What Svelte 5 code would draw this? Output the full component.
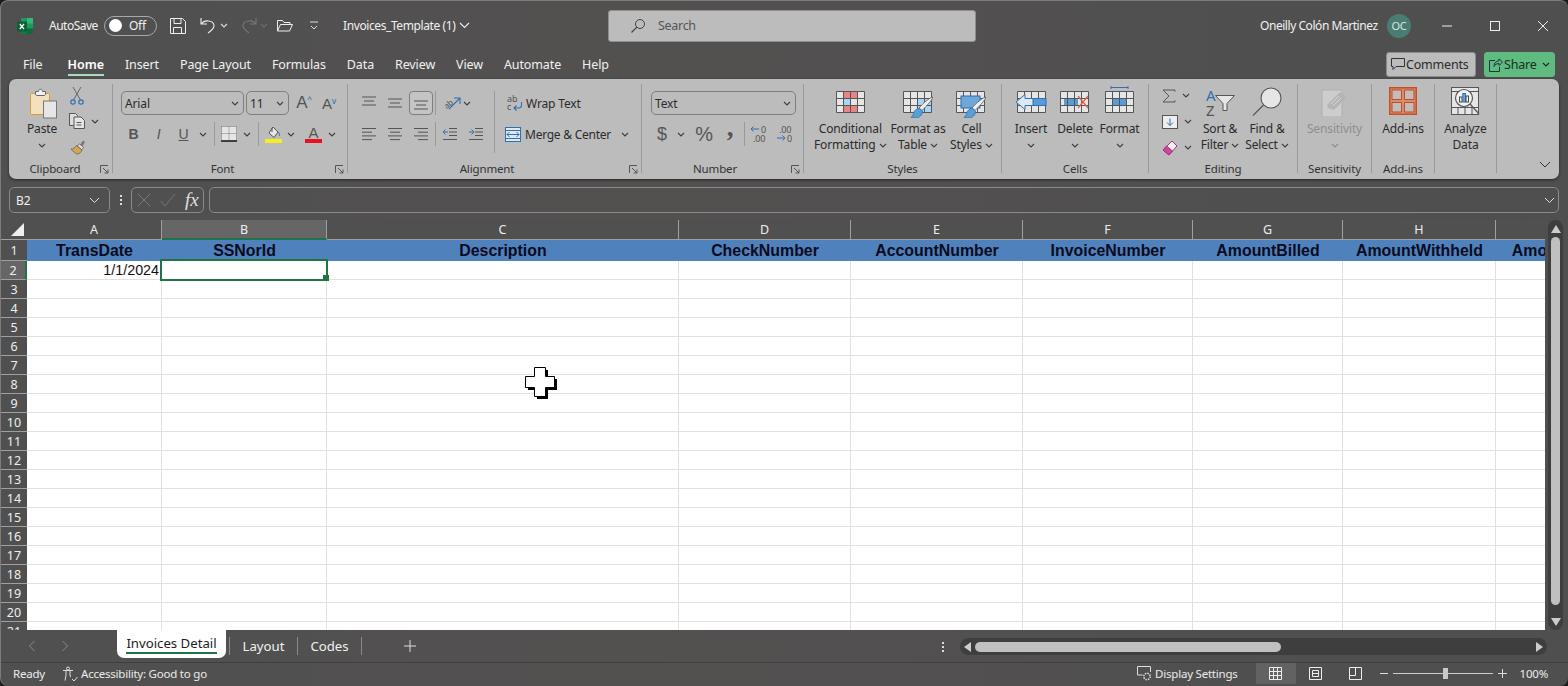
<script>
	const menus = ['File', 'Home', 'Insert', 'Page Layout', 'Formulas', 'Data', 'Review', 'View', 'Automate', 'Help'];
	const cols = [
		{ n: 'A', w: 135, h: 'TransDate' },
		{ n: 'B', w: 165, h: 'SSNorId' },
		{ n: 'C', w: 352, h: 'Description' },
		{ n: 'D', w: 172, h: 'CheckNumber' },
		{ n: 'E', w: 172, h: 'AccountNumber' },
		{ n: 'F', w: 170, h: 'InvoiceNumber' },
		{ n: 'G', w: 150, h: 'AmountBilled' },
		{ n: 'H', w: 153, h: 'AmountWithheld' },
		{ n: '', w: 150, h: 'AmountApplied' } // letter I sits past the right edge, only "Amo" shows
	];
	const rows = Array.from({ length: 20 }, (_, i) => i + 2);
	const gridCols = `26px ${cols.map((c) => c.w + 'px').join(' ')}`;

	// align icons: [x1, x2] for each of the 4 bars
	const alignLeft = [[2, 16], [2, 12], [2, 16], [2, 12]];
	const alignCenter = [[2, 16], [4, 14], [2, 16], [4, 14]];
	const alignRight = [[2, 16], [6, 16], [2, 16], [6, 16]];
</script>

{#snippet chev(color = '#404040')}
	<svg class="chev" width="8" height="5" viewBox="0 0 8 5"><path d="M1 1l3 3 3-3" fill="none" stroke={color} stroke-width="1.1" /></svg>
{/snippet}

{#snippet launcher()}
	<svg class="launcher" width="9" height="9" viewBox="0 0 9 9"><path d="M.5 8V.5H8M3 3l5 5M8 4.500V8H4.500" fill="none" stroke="#555" /></svg>
{/snippet}

{#snippet bars(list)}
	<svg width="18" height="16" viewBox="0 0 18 16">
		{#each list as b, i}
			<path d="M{b[0]} {2.5 + i * 3.7}H{b[1]}" stroke="#555" />
		{/each}
	</svg>
{/snippet}

{#snippet vbars(y)}
	<svg width="18" height="16" viewBox="0 0 18 16">
		<path d="M2 {y}H16M4 {y + 4}H14M2 {y + 8}H16" stroke="#555" fill="none" />
	</svg>
{/snippet}

{#snippet table(fills = [])}
	<g>
		<rect x=".5" y=".5" width="28" height="21" fill="#e6e6e6" />
		{#each fills as f}
			<rect x={f[0]} y={f[1]} width={f[2]} height={f[3]} fill={f[4]} />
		{/each}
		<path d="M.5.500h28v21H.5zM.5 7.500h28M.5 14.500h28M7.500.5v21M14.500.5v21M21.500.5v21" fill="none" stroke="#555" />
	</g>
{/snippet}

{#snippet brush()}
	<path d="M29.500 6c1 2-6 9-10.500 13.500l-3-2.500c4-5 10.500-10 13.500-11z" fill="#eee" stroke="#555" stroke-width=".8" />
	<path d="M8 26.500c1-1 2-2 2.500-4 .5-3 3-5 6-5l3 2.500c0 4-3 7-7 7z" fill="#5a9fd4" stroke="#2f6fb3" stroke-width=".8" />
{/snippet}

<div class="window">
	<header class="title">
		<svg class="logo" width="18" height="18" viewBox="0 0 18 18">
			<rect x="5" y="1" width="12" height="16" rx="1" fill="#1f9a5c" />
			<rect x="11" y="1" width="6" height="5.5" fill="#33b877" />
			<rect x="11" y="11.5" width="6" height="5.5" fill="#10683c" />
			<rect x="5" y="11.5" width="6" height="5.5" fill="#0e7c43" />
			<rect x="1" y="4.5" width="10" height="10" rx="1" fill="#0d5f36" />
			<path d="M3.800 7l4.200 5M8 7l-4.200 5" stroke="#fff" stroke-width="1.300" />
		</svg>
		<span class="autosave">AutoSave</span>
		<span class="toggle"><i></i><span>Off</span></span>
		<svg class="qa save" width="16" height="16" viewBox="0 0 16 16"><path d="M.5.500h12l3 3v12H.5zM4 .5v5h7v-5M3.500 15.500v-6h8v6" fill="none" stroke="#eee" /></svg>
		<svg class="qa undo" width="16" height="17" viewBox="0 0 16 17"><path d="M1 1v6h6M1.500 7C4 2.500 13 3 14 8c.5 3.500-3 6-6 8" fill="none" stroke="#eee" stroke-width="1.100" /></svg>
		<span class="qa c1">{@render chev('#ddd')}</span>
		<svg class="qa redo" width="16" height="17" viewBox="0 0 16 17"><path d="M15 1v6H9M14.500 7C12 2.500 3 3 2 8c-.5 3.500 3 6 6 8" fill="none" stroke="#777" stroke-width="1.100" /></svg>
		<span class="qa c2">{@render chev('#6d6d6d')}</span>
		<svg class="qa open" width="16" height="13" viewBox="0 0 16 13"><path d="M.5 12V1.500h5l1.500 2h6v2M.5 12l3-6.500h12L12.500 12z" fill="none" stroke="#eee" /></svg>
		<svg class="qa more" width="10" height="10" viewBox="0 0 10 10"><path d="M1 1h8M2 5l3 3 3-3" fill="none" stroke="#ddd" /></svg>
		<span class="file">Invoices_Template (1)</span>
		<span class="file-chev"><svg width="11" height="7" viewBox="0 0 11 7"><path d="M1 1l4.500 4.500L10 1" fill="none" stroke="#eee" stroke-width="1.100" /></svg></span>
		<div class="search">
			<svg width="16" height="16" viewBox="0 0 16 16"><circle cx="10" cy="6" r="4.500" fill="none" stroke="#444" /><path d="M6.800 9.200L1.500 14.500" stroke="#444" stroke-width="1.200" /></svg>
			<span>Search</span>
		</div>
		<span class="user">Oneilly Colón Martinez</span>
		<span class="avatar">OC</span>
		<div class="winbtns">
			<svg width="12" height="12" viewBox="0 0 12 12"><path d="M1 6h10" stroke="#eee" /></svg>
			<svg width="12" height="12" viewBox="0 0 12 12"><rect x="1.500" y="1.500" width="9" height="9" fill="none" stroke="#eee" /></svg>
			<svg width="12" height="12" viewBox="0 0 12 12"><path d="M1 1l10 10M11 1L1 11" stroke="#eee" /></svg>
		</div>
	</header>

	<nav class="menu">
		{#each menus as m}
			<span class:active={m === 'Home'}>{m}</span>
		{/each}
		<div class="menu-actions">
			<button class="comments">
				<svg width="14" height="13" viewBox="0 0 14 13"><path d="M.5.500h13v8H5l-3 3v-3H.5z" fill="none" stroke="#333" /></svg>
				Comments
			</button>
			<button class="share">
				<svg width="14" height="14" viewBox="0 0 14 14"><path d="M10 .8l3.500 3.400L10 7.600V5.500C7.500 5.500 6 6.500 5 8.500c0-3.500 2-5.500 5-5.700zM6 2.500H.5v11h10V9" fill="none" stroke="#234" /></svg>
				Share
				{@render chev('#223')}
			</button>
		</div>
	</nav>

	<section class="ribbon">
		<div class="grp clipboard">
			<div class="body">
				<div class="big paste">
					<svg class="ico top" width="32" height="32" viewBox="0 0 32 32">
						<rect x="2.500" y="5.500" width="19" height="21" rx="1" fill="#f1e1bd" stroke="#d39e3a" />
						<path d="M7.500 6V3.500h3c0-3 4-3 4 0h3V6c0 1-1 1.500-1.500 1.500H9C8 7.500 7.500 7 7.500 6z" fill="#f2f2f2" stroke="#666" />
						<rect x="15.500" y="13" width="13" height="17" fill="#e6e6e6" stroke="#777" />
					</svg>
					<span>Paste</span>
					{@render chev()}
				</div>
				<div class="clip-tools">
					<svg width="14" height="18" viewBox="0 0 14 18"><path d="M3 0l7.500 13M11 0L3.500 13" stroke="#666" /><circle cx="3" cy="15" r="2.200" fill="none" stroke="#2f6fb3" stroke-width="1.200" /><circle cx="11" cy="15" r="2.200" fill="none" stroke="#2f6fb3" stroke-width="1.200" /></svg>
					<span class="with-chev">
						<svg width="16" height="16" viewBox="0 0 16 16"><path d="M4.500 12.500H.5V.5h6l2 2v1" fill="#ddd" stroke="#555" /><path d="M5 4h7l3.500 3.500v8H5z" fill="#e6e6e6" stroke="#555" /><path d="M7.500 9.500h5M7.500 12h5" stroke="#555" /></svg>
						{@render chev()}
					</span>
					<svg class="painter" width="16" height="16" viewBox="0 0 16 16"><path d="M10 6l3-4.500 2 1.500-3 5z" fill="#777" /><path d="M9.500 5L14 8.500l-2.500 2L7 7z" fill="#ddd" stroke="#555" stroke-width=".7" /><path d="M6.500 6.500L12 11c-1 2.500-3 4-4.500 4-2 0-4.500-3-6.500-5 2 .5 4-1.500 5.500-3.500z" fill="#d6a652" stroke="#555" stroke-width=".7" /></svg>
				</div>
			</div>
			<div class="label launched">Clipboard{@render launcher()}</div>
		</div>

		<div class="grp font">
			<div class="body rows">
				<div class="r font-r1">
					<span class="combo name">Arial {@render chev()}</span>
					<span class="combo size">11 {@render chev()}</span>
					<span class="bigA">A<sup>^</sup></span>
					<span class="smallA">A<sup>v</sup></span>
				</div>
				<div class="r font-r2">
					<b class="fmt">B</b><i class="fmt">I</i><u class="fmt">U</u>
					{@render chev()}
					<span class="sep"></span>
					<svg width="16" height="16" viewBox="0 0 16 16"><path d="M.5.500h15v14H.5z" fill="#e6e6e6" /><path d="M.5.500h15M.5.500v14M15.500.500v14M8 .5v14M.5 7.500h15" stroke="#777" stroke-dasharray="1 1" fill="none" /><path d="M0 15h16" stroke="#111" stroke-width="1.400" /></svg>
					{@render chev()}
					<span class="sep"></span>
					<svg width="17" height="17" viewBox="0 0 17 17"><path d="M8 1l5 5-4 5.500L4 7z" fill="#e6e6e6" stroke="#555" /><path d="M7 2v4" stroke="#555" /><path d="M13.500 6c1 2 1.500 3 .5 4" stroke="#2f6fb3" fill="none" /><rect x="0" y="13" width="17" height="4" fill="#f7ee21" /></svg>
					{@render chev()}
					<svg class="colorA" width="17" height="18" viewBox="0 0 17 18"><text x="8.500" y="12.500" text-anchor="middle">A</text><rect y="14" width="17" height="4" fill="#e81123" /></svg>
					{@render chev()}
				</div>
			</div>
			<div class="label launched">Font{@render launcher()}</div>
		</div>

		<div class="grp align">
			<div class="body align-body">
				<div class="rows align-left">
					<div class="r al-r1">
						{@render vbars(2)}
						{@render vbars(4)}
						<span class="selected">{@render vbars(6)}</span>
						<span class="sep"></span>
						<span></span>
						<svg width="20" height="18" viewBox="0 0 20 18"><text x="1" y="13" class="orient" transform="rotate(-40 6 9)">ab</text><path d="M7 15L18 4M12 4h6v6" fill="none" stroke="#2f6fb3" stroke-width="1.100" /></svg>
						{@render chev()}
					</div>
					<div class="r al-r2">
						{@render bars(alignLeft)}
						{@render bars(alignCenter)}
						{@render bars(alignRight)}
						<span class="sep"></span>
						<svg width="16" height="14" viewBox="0 0 16 14"><path d="M7 1.500h8M7 5h8M7 8.500h8M1 12.500h14" stroke="#555" /><path d="M6 5H1M3.500 2.500L1 5l2.500 2.500" stroke="#2f6fb3" fill="none" /></svg>
						<svg width="16" height="14" viewBox="0 0 16 14"><path d="M7 1.500h8M7 5h8M7 8.500h8M1 12.500h14" stroke="#555" /><path d="M1 5h5M3.500 2.500L6 5 3.500 7.500" stroke="#2f6fb3" fill="none" /></svg>
					</div>
				</div>
				<span class="tall-sep"></span>
				<div class="rows align-right">
					<div class="wide-btn wrap">
						<svg width="16" height="20" viewBox="0 0 16 20"><text x="0" y="9" class="mini">ab</text><text x="0" y="17" class="mini">c</text><path d="M14.500 9v3.500c0 2-1.500 2.500-3 2.500H7M9.500 12.500L7 15l2.500 2.500" fill="none" stroke="#2f6fb3" stroke-width="1.100" /></svg>
						<span>Wrap Text</span>
					</div>
					<div class="wide-btn merge">
						<svg width="16" height="15" viewBox="0 0 16 15"><rect x=".5" y=".5" width="15" height="14" fill="#dfe7ef" stroke="#2f6fb3" /><path d="M.5 3.500h15M.5 11.500h15" stroke="#2f6fb3" /><path d="M2 7.500h12M4.500 5L2 7.500 4.500 10M11.500 5L14 7.500 11.500 10" fill="none" stroke="#2f6fb3" /></svg>
						<span>Merge &amp; Center</span>
						{@render chev()}
					</div>
				</div>
			</div>
			<div class="label launched">Alignment{@render launcher()}</div>
		</div>

		<div class="grp number">
			<div class="body rows">
				<div class="r"><span class="combo fmtbox">Text {@render chev()}</span></div>
				<div class="r num-r2">
					<span class="sym">$</span>
					{@render chev()}
					<span class="sym pct">%</span>
					<span class="sym comma">,</span>
					<span class="sep"></span>
					<svg width="18" height="20" viewBox="0 0 18 20"><text x="11" y="9" class="dec">0</text><text x="3" y="18" class="dec">.00</text><path d="M9 5H1M3.500 2.500L1 5l2.500 2.500" fill="none" stroke="#2f6fb3" /></svg>
					<svg width="18" height="20" viewBox="0 0 18 20"><text x="4" y="9" class="dec">.00</text><text x="12" y="18" class="dec">0</text><path d="M2 14h8M7.500 11.500L10 14l-2.500 2.500" fill="none" stroke="#2f6fb3" /></svg>
				</div>
			</div>
			<div class="label launched">Number{@render launcher()}</div>
		</div>

		<div class="grp styles">
			<div class="body bigs">
				<div class="big">
					<svg class="ico" width="29" height="22" viewBox="0 0 29 22">{@render table([[7.500, .5, 14, 7, '#e88484'], [7.500, 7.500, 7, 7, '#a9d6f5'], [7.500, 14.500, 14, 7, '#e88484']])}</svg>
					<span>Conditional</span>
					<span>Formatting {@render chev()}</span>
				</div>
				<div class="big">
					<svg class="ico" width="31" height="27" viewBox="0 0 31 27">{@render table([[14.500, 7.500, 14, 14, '#a9d6f5']])}{@render brush()}</svg>
					<span>Format as</span>
					<span>Table {@render chev()}</span>
				</div>
				<div class="big">
					<svg class="ico" width="31" height="27" viewBox="0 0 31 27">{@render table()}<rect x="5" y="5" width="19" height="12" fill="#6ea7da" stroke="#2f6fb3" />{@render brush()}</svg>
					<span>Cell</span>
					<span>Styles {@render chev()}</span>
				</div>
			</div>
			<div class="label">Styles</div>
		</div>

		<div class="grp cells">
			<div class="body bigs">
				<div class="big">
					<svg class="ico" width="32" height="22" viewBox="0 0 32 22">
						<g transform="translate(2 0)">{@render table()}</g>
						<rect x="10" y="7.500" width="21" height="7" fill="#5b9bd5" stroke="#2f6fb3" />
						<path d="M10 3.500L1 11l9 7.500v-4h8v-7h-8z" fill="#dfe7ef" stroke="#2f6fb3" />
					</svg>
					<span>Insert</span>
					{@render chev()}
				</div>
				<div class="big">
					<svg class="ico" width="30" height="22" viewBox="0 0 30 22">
						{@render table([[4, 7.500, 14, 7, '#5b9bd5']])}
						<path d="M18 5l10 12M28 5L18 17" stroke="#d9644a" stroke-width="1.200" />
					</svg>
					<span>Delete</span>
					{@render chev()}
				</div>
				<div class="big">
					<svg class="ico raised" width="29" height="27" viewBox="0 0 29 27">
						<path d="M6 1.500h17M6 0v3M23 0v3" stroke="#2f6fb3" />
						<g transform="translate(0 5)">{@render table([[7.500, 7.500, 14, 7, '#5b9bd5']])}</g>
					</svg>
					<span>Format</span>
					{@render chev()}
				</div>
			</div>
			<div class="label">Cells</div>
		</div>

		<div class="grp editing">
			<div class="body bigs">
				<div class="edit-tools">
					<span>
						<svg width="14" height="14" viewBox="0 0 14 14"><path d="M13 2.500V1H1l6 6-6 6h12v-1.500" fill="none" stroke="#555" /></svg>
						{@render chev()}
					</span>
					<span>
						<svg width="16" height="14" viewBox="0 0 16 14"><rect x=".5" y=".5" width="15" height="13" fill="#eee" stroke="#555" /><path d="M8 3.500v7M5 7.500l3 3 3-3" fill="none" stroke="#2f6fb3" /></svg>
						{@render chev()}
					</span>
					<span>
						<svg width="16" height="16" viewBox="0 0 16 16"><path d="M1 10l6 5 8-9-5-5z" fill="#eee" stroke="#a03080" /><path d="M1 10l6 5 3.500-4L4.500 6z" fill="#d0469c" stroke="#a03080" /></svg>
						{@render chev()}
					</span>
				</div>
				<div class="big">
					<svg class="ico top sort" width="30" height="32" viewBox="0 0 30 32"><text x="1" y="14" class="az blue">A</text><text x="1" y="29" class="az">Z</text><path d="M10.500 8.500h19l-7.500 8v7h-4v-7z" fill="#e6e6e6" stroke="#555" /></svg>
					<span>Sort &amp;</span>
					<span>Filter {@render chev()}</span>
				</div>
				<div class="big">
					<svg class="ico top" width="31" height="30" viewBox="0 0 31 30"><circle cx="19" cy="11" r="10" fill="#e6e6e6" stroke="#555" stroke-width="1.100" /><path d="M11.500 18L1 28.500" stroke="#555" stroke-width="1.100" /></svg>
					<span>Find &amp;</span>
					<span>Select {@render chev()}</span>
				</div>
			</div>
			<div class="label">Editing</div>
		</div>

		<div class="grp sensitivity">
			<div class="body bigs">
				<div class="big dim">
					<svg class="ico top" width="28" height="30" viewBox="0 0 28 30"><path d="M1 3h20v27H1z" fill="#cdcdcd" stroke="#b0b0b0" /><path d="M6 18L19 5l7 5-13 13-6-2z" fill="#b5b5b5" /><path d="M10 17l8-8M12 19l8-8" stroke="#d6d6d6" /></svg>
					<span>Sensitivity</span>
					{@render chev('#8c8c8c')}
				</div>
			</div>
			<div class="label">Sensitivity</div>
		</div>

		<div class="grp addins">
			<div class="body bigs">
				<div class="big">
					<svg class="ico top" width="28" height="28" viewBox="0 0 28 28"><rect x=".75" y=".75" width="26.500" height="26.500" fill="#e08a6a" stroke="#c4502a" stroke-width="1.500" /><path d="M3 3h9.500v9.500H3zM15.500 3H25v9.500h-9.500zM3 15.500h9.500V25H3zM15.500 15.500H25V25h-9.500z" fill="#c4bcb8" stroke="#b5512e" /></svg>
					<span>Add-ins</span>
				</div>
			</div>
			<div class="label">Add-ins</div>
		</div>

		<div class="grp analyze">
			<div class="body bigs">
				<div class="big">
					<svg class="ico top" width="29" height="29" viewBox="0 0 29 29">
						<rect x=".5" y=".5" width="27" height="27" fill="#e6e6e6" stroke="#555" />
						<path d="M.5 4.500h27M.5 20.500h27M7 20.500v7M14 20.500v7M21 20.500v7" stroke="#555" fill="none" />
						<circle cx="13" cy="11" r="8.500" fill="#f2f2f2" stroke="#555" stroke-width="1.200" />
						<path d="M19 17l9 10" stroke="#555" stroke-width="1.200" />
						<rect x="8.500" y="10" width="2.500" height="5" fill="none" stroke="#444" />
						<rect x="11.800" y="6.500" width="2.600" height="8.500" fill="#6ea7da" stroke="#2f6fb3" />
						<rect x="15" y="9" width="2.500" height="6" fill="none" stroke="#444" />
					</svg>
					<span>Analyze</span>
					<span>Data</span>
				</div>
			</div>
			<div class="label">&nbsp;</div>
		</div>

		<svg class="collapse" width="12" height="7" viewBox="0 0 12 7"><path d="M1 1l5 5 5-5" fill="none" stroke="#333" /></svg>
	</section>

	<div class="formula">
		<div class="namebox"><span>B2</span><svg width="11" height="7" viewBox="0 0 11 7"><path d="M1 1l4.500 4.500L10 1" fill="none" stroke="#ddd" /></svg></div>
		<span class="kebab"><i></i><i></i><i></i></span>
		<div class="fx-box">
			<svg width="14" height="14" viewBox="0 0 14 14"><path d="M1 1l12 12M13 1L1 13" stroke="#777" /></svg>
			<svg width="16" height="14" viewBox="0 0 16 14"><path d="M1 8l4 5L15 1" fill="none" stroke="#777" /></svg>
			<span>fx</span>
		</div>
		<div class="input"><svg width="11" height="7" viewBox="0 0 11 7"><path d="M1 1l4.500 4.500L10 1" fill="none" stroke="#ddd" /></svg></div>
	</div>

	<main class="sheet">
		<div class="grid" style:grid-template-columns={gridCols}>
			<div class="corner"><svg width="13" height="13" viewBox="0 0 13 13"><path d="M13 0v13H0z" fill="#eee" /></svg></div>
			{#each cols as c}
				<div class="colhead" class:sel={c.n === 'B'}>{c.n}</div>
			{/each}
			<div class="rowhead">1</div>
			{#each cols as c}
				<div class="hcell">{c.h}</div>
			{/each}
			{#each rows as r}
				<div class="rowhead" class:sel={r === 2}>{r}</div>
				{#each cols as c}
					<div class="cell" class:active={r === 2 && c.n === 'B'}>{r === 2 && c.n === 'A' ? '1/1/2024' : ''}</div>
				{/each}
			{/each}
		</div>
		<div class="vscroll">
			<svg width="10" height="8" viewBox="0 0 10 8"><path d="M0 8l5-8 5 8z" fill="#ccc" /></svg>
			<span class="vthumb"></span>
			<svg width="10" height="8" viewBox="0 0 10 8"><path d="M0 0l5 8 5-8z" fill="#ccc" /></svg>
		</div>
		<svg class="cursor" width="32" height="32" viewBox="0 0 32 32">
			<path d="M12 3h11v9h9v11h-9v9H12v-9H3V12h9z" fill="#000" />
			<path d="M9.500.5h11v9h9v11h-9v9h-11v-9H.5v-11h9z" fill="#fff" stroke="#000" />
		</svg>
	</main>

	<div class="tabs">
		<div class="nav">
			<svg width="8" height="12" viewBox="0 0 8 12"><path d="M6.500 1l-5 5 5 5" fill="none" stroke="#8a8a8a" /></svg>
			<svg width="8" height="12" viewBox="0 0 8 12"><path d="M1.500 1l5 5-5 5" fill="none" stroke="#8a8a8a" /></svg>
		</div>
		<div class="tab active"><span>Invoices Detail</span></div>
		<span class="tabsep"></span>
		<div class="tab layout">Layout</div>
		<span class="tabsep"></span>
		<div class="tab codes">Codes</div>
		<span class="tabsep"></span>
		<svg class="plus" width="12" height="12" viewBox="0 0 12 12"><path d="M6 0v12M0 6h12" stroke="#ddd" /></svg>
		<span class="kebab tab-kebab"><i></i><i></i><i></i></span>
		<div class="hscroll">
			<svg width="7" height="10" viewBox="0 0 7 10"><path d="M7 0L0 5l7 5z" fill="#ccc" /></svg>
			<span class="hthumb"></span>
			<svg width="7" height="10" viewBox="0 0 7 10"><path d="M0 0l7 5-7 5z" fill="#ccc" /></svg>
		</div>
	</div>

	<footer class="status">
		<span class="ready">Ready</span>
		<svg class="acc" width="16" height="16" viewBox="0 0 16 16"><circle cx="6" cy="2.500" r="1.500" fill="none" stroke="#ddd" /><path d="M1 4.500h10M4 5v4l-1 5.500M8 5v4l.5 2M10 13l2 2 3.500-4" fill="none" stroke="#ddd" /></svg>
		<span>Accessibility: Good to go</span>
		<svg class="disp" width="15" height="15" viewBox="0 0 15 15"><path d="M.5 9V.5h13V6M.5 9h5" fill="none" stroke="#ddd" /><circle cx="10" cy="10.500" r="3.200" fill="none" stroke="#ddd" stroke-width="1.500" stroke-dasharray="1.500 1" /></svg>
		<span>Display Settings</span>
		<div class="views">
			<span class="view sel"><svg width="13" height="13" viewBox="0 0 13 13"><path d="M.5.500h12v12H.5zM.5 4.500h12M.5 8.500h12M4.500.5v12M8.500.5v12" fill="none" stroke="#eee" /></svg></span>
			<span class="view"><svg width="13" height="13" viewBox="0 0 13 13"><path d="M.5.500h12v12H.5zM3.500 3.500h6v6h-6zM3.500 6.500h6" fill="none" stroke="#eee" /></svg></span>
			<span class="view"><svg width="13" height="13" viewBox="0 0 13 13"><path d="M.5.500h12v12H.5zM.5 8.500h6V.5" fill="none" stroke="#eee" /></svg></span>
		</div>
		<div class="zoom">
			<svg width="8" height="9" viewBox="0 0 8 9"><path d="M0 4.500h8" stroke="#ddd" /></svg>
			<span class="track"><i></i></span>
			<svg width="9" height="9" viewBox="0 0 9 9"><path d="M0 4.500h9M4.500 0v9" stroke="#ddd" /></svg>
			<span class="pctz">100%</span>
		</div>
	</footer>
</div>

<style>
	:global(body) {
		margin: 0;
		background: #1c1c1c;
	}

	.window {
		width: 1568px;
		height: 686px;
		box-sizing: border-box;
		overflow: hidden;
		border-radius: 8px;
		border: 1px solid #7c7c7c;
		border-bottom: 0;
		border-right: 0;
		background: linear-gradient(90deg, #505050 0%, #535050 40%, #4f4f4f 100%);
		font-family: 'Noto Sans', 'Open Sans', sans-serif;
		font-size: 12px;
		color: #2b2b2b;
		display: flex;
		flex-direction: column;
		position: relative;
	}

	svg {
		display: block;
		flex: none;
	}

	button {
		font: inherit;
	}

	/* title bar */
	.title {
		height: 49px;
		flex: none;
		display: flex;
		align-items: center;
		color: #f0f0f0;
		letter-spacing: -0.3px;
	}

	.logo {
		margin-left: 15px;
	}

	.autosave {
		margin-left: 15px;
		width: 55px;
		letter-spacing: -0.5px;
	}

	.toggle {
		width: 53px;
		height: 20px;
		box-sizing: border-box;
		border: 1px solid #a8a8a8;
		border-radius: 10px;
		display: flex;
		align-items: center;
		gap: 7px;
		padding-left: 4px;
	}

	.toggle i {
		width: 13px;
		height: 13px;
		border-radius: 50%;
		background: #fff;
	}

	.qa {
		flex: none;
	}

	.save {
		margin-left: 13px;
	}

	.undo {
		margin-left: 14px;
	}

	.c1 {
		margin-left: 4px;
	}

	.redo {
		margin-left: 13px;
	}

	.c2 {
		margin-left: 3px;
	}

	.open {
		margin-left: 9px;
	}

	.more {
		margin-left: 16px;
	}

	.file {
		margin-left: 24px;
		width: 114px;
		white-space: nowrap;
		letter-spacing: -0.4px;
	}

	.file-chev {
		margin-left: 2px;
	}

	.search {
		margin-left: 138px;
		width: 368px;
		height: 32px;
		box-sizing: border-box;
		background: #bcbcbc;
		border: 1px solid #8f8f8f;
		border-radius: 3px;
		display: flex;
		align-items: center;
		padding-left: 21px;
		gap: 12px;
		color: #555;
		font-size: 12.500px;
	}

	.user {
		margin-left: auto;
		width: 127px;
		white-space: nowrap;
		letter-spacing: -0.45px;
	}

	.avatar {
		width: 24px;
		height: 24px;
		border-radius: 50%;
		background: #4b7c73;
		font-size: 11px;
		display: flex;
		align-items: center;
		justify-content: center;
		color: #d8e6e2;
	}

	.winbtns {
		display: flex;
		gap: 36px;
		margin-left: 30px;
		margin-right: 19px;
	}

	/* menu */
	.menu {
		height: 29px;
		flex: none;
		display: flex;
		align-items: flex-start;
		gap: 21px;
		padding-left: 22px;
		color: #f0f0f0;
		font-size: 12.500px;
		letter-spacing: -0.12px;
	}

	.menu > span {
		line-height: 30px;
		height: 24px;
		white-space: nowrap;
	}

	.menu > span.active {
		font-weight: 600;
		color: #fff;
		border-bottom: 2px solid #a8dcc0;
		margin-left: 4px;
		letter-spacing: 0;
	}

	.menu-actions {
		margin-left: auto;
		margin-right: 13px;
		display: flex;
		gap: 8px;
		margin-top: 2px;
	}

	.comments,
	.share {
		height: 25px;
		border-radius: 3px;
		display: flex;
		align-items: center;
		gap: 1px;
		padding: 0 0 0 4px;
		color: #2b2b2b;
		font-size: 12.500px;
		letter-spacing: -0.2px;
	}

	.comments {
		width: 90px;
		background: #bcbcbc;
		border: 1px solid #8c8c8c;
	}

	.share {
		width: 71px;
		background: #5fbb80;
		border: 1px solid #5fbb80;
		color: #17301f;
	}

	.share .chev {
		margin-left: 4px;
	}

	/* ribbon */
	.ribbon {
		flex: none;
		height: 100px;
		margin: 0 9px 0 8px;
		box-sizing: border-box;
		padding: 5px 0 6px;
		background: #bcbcbc;
		border-radius: 7px;
		box-shadow: 0 1px 3px rgba(0, 0, 0, 0.55);
		display: flex;
		position: relative;
		letter-spacing: -0.14px;
	}

	.grp {
		box-sizing: border-box;
		height: 89px;
		border-right: 1px solid #9a9a9a;
		display: flex;
		flex-direction: column;
		flex: none;
	}

	.clipboard {
		width: 104px;
	}

	.font {
		width: 235px;
	}

	.align {
		width: 294px;
	}

	.number {
		width: 162px;
	}

	.styles {
		width: 198px;
	}

	.cells {
		width: 147px;
	}

	.editing {
		width: 149px;
	}

	.sensitivity {
		width: 74px;
	}

	.addins {
		width: 63px;
	}

	.analyze {
		width: 62px;
	}

	.body {
		height: 76px;
		flex: none;
		display: flex;
		box-sizing: border-box;
	}

	.label {
		height: 18px;
		line-height: 18px;
		margin-bottom: -5px;
		text-align: center;
		font-size: 11.500px;
		color: #333;
		position: relative;
	}

	.label.launched {
		padding-right: 15px;
	}

	.clipboard .label.launched {
		padding-right: 11px;
	}

	.launcher {
		position: absolute;
		right: 3px;
		top: 5px;
	}

	.big {
		display: grid;
		grid-template-rows: 34px 16px 16px;
		justify-items: center;
		align-items: center;
		line-height: 16px;
		white-space: nowrap;
	}

	.big > span {
		display: flex;
		align-items: center;
		gap: 3px;
		height: 16px;
		justify-content: center;
	}

	.big .ico {
		align-self: start;
		margin-top: 4px;
	}

	.big .ico.raised {
		margin-top: -1px;
	}

	.big .ico.top {
		margin-top: 0;
	}

	.bigs {
		display: grid;
		padding-top: 3px;
	}

	.big.dim {
		color: #8f8f8f;
	}

	.sort {
		overflow: visible;
	}

	.paste {
		width: 50px;
		margin-left: 8px;
		padding-top: 3px;
		height: 73px;
		align-self: start;
	}

	.paste .ico.top {
		margin-top: 1px;
		margin-left: 4px;
	}

	.clip-tools {
		display: flex;
		flex-direction: column;
		align-items: flex-start;
		padding: 3px 0 0 0;
		gap: 8px;
		margin-left: 2px;
	}

	.clip-tools > svg {
		margin-left: 1px;
	}

	.clip-tools .painter {
		margin-top: 2px;
	}

	.with-chev {
		display: flex;
		align-items: center;
		gap: 6px;
	}

	/* two-row groups */
	.rows {
		display: flex;
		flex-direction: column;
		padding-top: 7px;
		gap: 7px;
		box-sizing: border-box;
	}

	.r {
		height: 24px;
		display: grid;
		align-items: center;
		justify-items: center;
	}

	.sep {
		width: 1px;
		height: 24px;
		background: #9a9a9a;
	}

	.combo {
		height: 24px;
		box-sizing: border-box;
		border: 1px solid #7e7e7e;
		border-radius: 5px;
		display: flex;
		align-items: center;
		justify-content: space-between;
		padding: 0 4px 0 3px;
		font-size: 12px;
		background: #bcbcbc;
	}

	.font .rows {
		padding-left: 8px;
	}

	.font-r1 {
		grid-template-columns: 123px 43px 0 22px 24px;
		column-gap: 2px;
		justify-items: stretch;
	}

	.font-r1 .size {
		grid-column: 2;
	}

	.bigA {
		grid-column: 4;
		font-size: 17px;
		color: #555;
		font-family: 'Liberation Sans', sans-serif;
		text-align: center;
		white-space: nowrap;
	}

	.smallA {
		grid-column: 5;
		font-size: 15px;
		color: #555;
		font-family: 'Liberation Sans', sans-serif;
		text-align: center;
		white-space: nowrap;
	}

	sup {
		font-size: 9px;
		color: #2f6fb3;
		vertical-align: 5px;
		line-height: 0;
	}

	.font-r2 {
		grid-template-columns: 25px 25px 25px 14px 8px 22px 14px 8px 22px 14px 30px 8px;
	}

	.fmt {
		font-family: 'Liberation Sans', sans-serif;
		font-size: 14px;
		color: #555;
	}

	.colorA text {
		font-family: 'Liberation Sans', sans-serif;
		font-size: 15px;
		fill: #555;
	}

	.align-body {
		padding-left: 8px;
	}

	.align-left {
		width: 138px;
		flex: none;
	}

	.al-r1 {
		grid-template-columns: 26px 26px 26px 2px 4px 24px 6px;
	}

	.al-r2 {
		grid-template-columns: 26px 26px 26px 2px 27px 26px;
	}

	.selected {
		width: 24px;
		height: 24px;
		box-sizing: border-box;
		border: 1px solid #7e7e7e;
		border-radius: 4px;
		background: #c4c4c4;
		display: flex;
		align-items: center;
		justify-content: center;
	}

	.orient {
		font-size: 8px;
		fill: #555;
		font-family: 'Noto Sans', sans-serif;
	}

	.mini {
		font-size: 9px;
		fill: #555;
		font-family: 'Noto Sans', sans-serif;
	}

	.tall-sep {
		width: 1px;
		height: 62px;
		background: #9a9a9a;
		margin-top: 7px;
		flex: none;
	}

	.align-right {
		padding-left: 10px;
		gap: 7px;
	}

	.wide-btn {
		height: 24px;
		display: flex;
		align-items: center;
		white-space: nowrap;
	}

	.wrap {
		gap: 3px;
		padding-left: 2px;
	}

	.merge {
		gap: 4px;
		letter-spacing: -0.25px;
	}

	.merge .chev {
		margin-left: 6px;
	}

	.number .rows {
		padding-left: 9px;
	}

	.fmtbox {
		width: 145px;
	}

	.number .r:first-child {
		justify-items: start;
	}

	.num-r2 {
		grid-template-columns: 22px 16px 30px 22px 6px 23px 28px;
	}

	.sym {
		font-size: 18px;
		color: #555;
		font-family: 'Liberation Sans', sans-serif;
	}

	.pct {
		font-size: 20px;
	}

	.comma {
		font-family: 'Liberation Serif', serif;
		font-weight: 700;
		font-size: 27px;
		line-height: 14px;
		margin-top: -14px;
	}

	.dec {
		font-size: 9px;
		fill: #555;
		font-family: 'Noto Sans', sans-serif;
	}

	.styles .body {
		grid-template-columns: 72px 64px 42px;
		padding-left: 10px;
	}

	.cells .body {
		grid-template-columns: 44px 44px 45px;
		padding-left: 7px;
	}

	.editing .body {
		grid-template-columns: 40px 46px 48px;
		padding-left: 8px;
	}

	.edit-tools {
		display: flex;
		flex-direction: column;
		gap: 9px;
		padding-left: 5px;
	}

	.edit-tools span {
		display: flex;
		align-items: center;
		gap: 6px;
		height: 17px;
	}

	.az {
		font-family: 'Noto Sans', sans-serif;
		font-size: 15px;
		fill: #555;
	}

	.az.blue {
		fill: #2f6fb3;
	}

	.sensitivity .body,
	.addins .body,
	.analyze .body {
		justify-content: center;
	}

	.collapse {
		position: absolute;
		right: 8px;
		bottom: 11px;
	}

	/* formula bar */
	.formula {
		flex: none;
		margin-top: 8px;
		height: 26px;
		padding-left: 8px;
		padding-right: 9px;
		display: flex;
		align-items: stretch;
		color: #f0f0f0;
	}

	.namebox,
	.fx-box,
	.input {
		box-sizing: border-box;
		border: 1px solid #8a8a8a;
		border-radius: 5px;
		display: flex;
		align-items: center;
	}

	.namebox {
		width: 101px;
		justify-content: space-between;
		padding: 0 9px 0 6px;
	}

	.kebab {
		display: flex;
		flex-direction: column;
		justify-content: center;
		gap: 2px;
		width: 21px;
		align-items: center;
	}

	.kebab i {
		width: 2px;
		height: 2px;
		background: #ddd;
	}

	.fx-box {
		width: 73px;
		padding-left: 5px;
		gap: 9px;
	}

	.fx-box span {
		font-family: 'Liberation Serif', serif;
		font-style: italic;
		font-size: 19px;
		line-height: 20px;
		color: #e0e0e0;
	}

	.input {
		flex: 1;
		margin-left: 5px;
		justify-content: flex-end;
		padding-right: 3px;
	}

	/* sheet */
	.sheet {
		flex: none;
		margin-top: 7px;
		height: 410px;
		display: flex;
		position: relative;
		overflow: hidden;
	}

	.grid {
		width: 1544px;
		height: 410px;
		flex: none;
		overflow: hidden;
		display: grid;
		grid-template-rows: 20px 21px repeat(20, 19px);
		font-family: 'Liberation Sans', sans-serif;
		background: #fff;
	}

	.corner,
	.colhead,
	.rowhead {
		background: #505050;
		color: #eee;
		font-family: 'Noto Sans', sans-serif;
		font-size: 12.500px;
		display: flex;
		align-items: center;
		justify-content: center;
		box-sizing: border-box;
	}

	.corner {
		justify-content: flex-end;
		padding-right: 3px;
		border-bottom: 1px solid #9f9f9f;
	}

	.colhead {
		border-right: 1px solid #9f9f9f;
		border-bottom: 1px solid #9f9f9f;
		white-space: nowrap;
	}

	.colhead.sel {
		background: #666;
		border-bottom: 2px solid #217346;
	}

	.rowhead {
		border-bottom: 1px solid #9f9f9f;
	}

	.rowhead.sel {
		background: #666;
		border-right: 2px solid #217346;
	}

	.hcell {
		background: #4f81bd;
		color: #0b0b1e;
		font-weight: 700;
		font-size: 15.900px;
		display: flex;
		align-items: center;
		justify-content: center;
		white-space: nowrap;
		overflow: hidden;
	}

	.cell {
		box-sizing: border-box;
		border-right: 1px solid #e1e1e1;
		border-bottom: 1px solid #e1e1e1;
		font-size: 14.300px;
		color: #111;
		display: flex;
		align-items: center;
		justify-content: flex-end;
		padding-right: 2px;
		position: relative;
	}

	.cell.active::after {
		content: '';
		position: absolute;
		left: -2px;
		top: -2px;
		width: 168px;
		height: 22px;
		box-sizing: border-box;
		border: 2px solid #217346;
		z-index: 2;
	}

	.cell.active::before {
		content: '';
		position: absolute;
		right: -3px;
		bottom: -2px;
		width: 6px;
		height: 6px;
		background: #217346;
		z-index: 3;
	}

	.vscroll {
		margin: 0 0 0 3px;
		width: 15px;
		height: 410px;
		background: #3e3e3e;
		border-radius: 8px;
		display: flex;
		flex-direction: column;
		align-items: center;
		padding-top: 5px;
		box-sizing: border-box;
		gap: 4px;
	}

	.vthumb {
		width: 9px;
		height: 368px;
		background: #c0c0c0;
		border-radius: 5px;
		flex: none;
		margin-bottom: 9px;
	}

	.cursor {
		position: absolute;
		left: 524px;
		top: 147px;
	}

	/* sheet tabs */
	.tabs {
		flex: none;
		height: 33px;
		display: flex;
		align-items: flex-start;
		border-bottom: 1px solid #3f3f3f;
		box-sizing: border-box;
		color: #f0f0f0;
		font-size: 13.200px;
	}

	.nav {
		display: flex;
		gap: 25px;
		padding: 10px 0 0 27px;
		width: 116px;
		flex: none;
		box-sizing: border-box;
	}

	.tab {
		line-height: 33px;
		flex: none;
	}

	.tab.active {
		width: 109px;
		height: 28px;
		background: #fff;
		color: #1d1d1d;
		border-radius: 0 0 7px 7px;
		display: flex;
		justify-content: center;
	}

	.tab.active span {
		line-height: 25px;
		height: 23px;
		box-sizing: border-box;
		border-bottom: 2px solid #217346;
		margin-top: 1px;
		white-space: nowrap;
	}

	.tabsep {
		width: 1px;
		height: 18px;
		background: #8a8a8a;
		margin-top: 7px;
		flex: none;
	}

	.tabs .tab.active + .tabsep {
		margin-left: 3px;
	}

	.layout {
		width: 67px;
		text-align: center;
	}

	.codes {
		width: 63px;
		text-align: center;
	}

	.plus {
		margin: 10px 0 0 42px;
	}

	.tab-kebab {
		margin-left: 516px;
		height: 33px;
		width: 21px;
	}

	.hscroll {
		margin-left: 7px;
		margin-top: 8px;
		width: 587px;
		height: 17px;
		background: #3e3e3e;
		border-radius: 9px;
		display: flex;
		align-items: center;
		padding: 0 4px;
		box-sizing: border-box;
		flex: none;
	}

	.hthumb {
		width: 306px;
		height: 10px;
		background: #c0c0c0;
		border-radius: 5px;
		margin: 0 auto 0 4px;
	}

	/* status bar */
	.status {
		flex: 1;
		display: flex;
		align-items: center;
		color: #ececec;
		font-size: 11.500px;
		letter-spacing: -0.22px;
		padding-bottom: 2px;
	}

	.ready {
		margin-left: 12px;
		width: 49px;
	}

	.acc {
		margin-right: 3px;
	}

	.disp {
		margin-left: auto;
		margin-right: 3px;
	}

	.views {
		display: flex;
		margin-left: 18px;
		align-self: stretch;
	}

	.view {
		width: 40px;
		display: flex;
		align-items: center;
		justify-content: center;
	}

	.view.sel {
		background: #626262;
	}

	.zoom {
		display: flex;
		align-items: center;
		margin-left: 4px;
		margin-right: 20px;
		gap: 5px;
	}

	.track {
		width: 100px;
		height: 1px;
		background: #ccc;
		position: relative;
	}

	.track i {
		position: absolute;
		left: 50px;
		top: -5px;
		width: 5px;
		height: 11px;
		background: #c8c8c8;
	}

	.pctz {
		margin-left: 8px;
	}
</style>
